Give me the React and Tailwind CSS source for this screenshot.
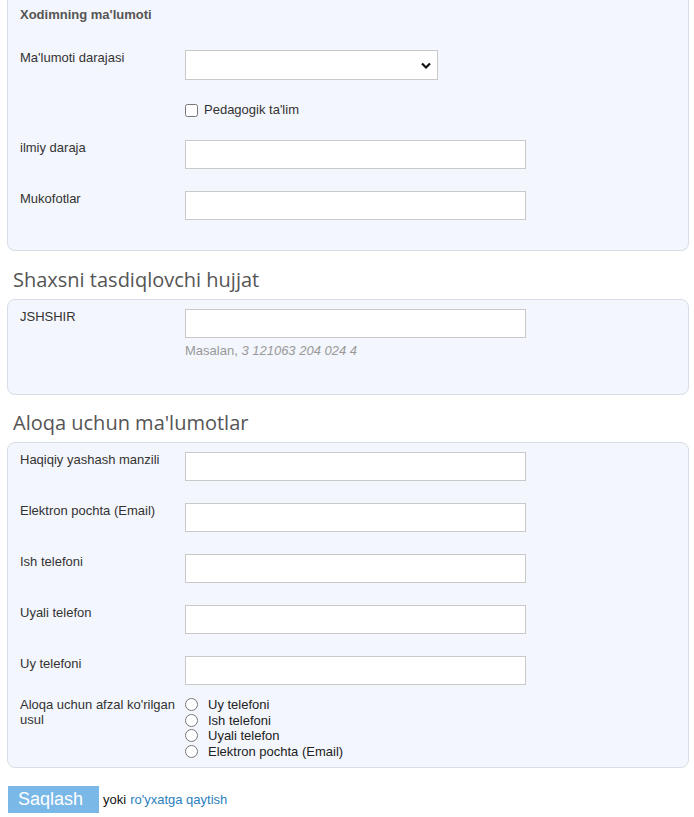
const labelCls = "w-[165px] shrink-0 pr-[5px] text-[13px] leading-[15px] text-[#333]";
const inputCls = "block h-[29px] w-[341px] border border-[#c9c9c9] bg-white px-1 text-[13px] outline-none";

function Row({ label, children, className = "" }) {
  return (
    <div className={"flex items-start " + className}>
      <div className={labelCls}>{label}</div>
      <div>{children}</div>
    </div>
  );
}

function Heading({ children, className = "pt-[15px]" }) {
  return (
    <h2 className={"pl-[6px] pb-[5px] text-[20px] leading-[28px] text-[#555] font-['Open_Sans',sans-serif] " + className}>
      {children}
    </h2>
  );
}

const radios = ["Uy telefoni", "Ish telefoni", "Uyali telefon", "Elektron pochta (Email)"];

export default function App() {
  return (
    <div className="min-h-[817px] bg-white pl-[7px] pr-[5px] font-['Liberation_Sans',Arial,sans-serif]">
      {/* Xodim */}
      <div className="rounded-b-lg border border-t-0 border-[#d8dee6] bg-[#f3f6fc] px-3 pt-[7px] pb-[30px]">
        <div className="mb-[27px] text-[13px] font-bold leading-[16px] text-[#555]">
          Xodimning ma'lumoti
        </div>
        <Row label="Ma'lumoti darajasi">
          <div className="relative h-[30px] w-[253px] border border-[#c9c9c9] bg-white">
            <svg
              className="absolute right-[5px] top-[11px]"
              width="12"
              height="8"
              viewBox="0 0 12 8"
            >
              <path d="M2 1.5 L6 5.5 L10 1.5" fill="none" stroke="#111" strokeWidth="2.2" />
            </svg>
          </div>
        </Row>
        <div className="mt-[20px] flex h-[20px] items-center pl-[165px]">
          <input type="checkbox" className="m-0 h-[13px] w-[13px]" />
          <span className="ml-[6px] text-[13px] text-[#333]">Pedagogik ta'lim</span>
        </div>
        <Row label="ilmiy daraja" className="mt-[20px]">
          <input className={inputCls} />
        </Row>
        <Row label="Mukofotlar" className="mt-[22px]">
          <input className={inputCls} />
        </Row>
      </div>

      <Heading>Shaxsni tasdiqlovchi hujjat</Heading>
      <div className="rounded-lg border border-[#d8dee6] bg-[#f3f6fc] px-3 pt-[9px] pb-[35px]">
        <Row label="JSHSHIR">
          <input className={inputCls} />
          <div className="mt-[5px] text-[13px] leading-[16px] text-[#999]">
            Masalan, <i>3 121063 204 024 4</i>
          </div>
        </Row>
      </div>

      <Heading className="pt-[14px]">Aloqa uchun ma'lumotlar</Heading>
      <div className="rounded-lg border border-[#d8dee6] bg-[#f3f6fc] px-3 pt-[9px] pb-[8px]">
        <div className="flex flex-col gap-[22px]">
          <Row label="Haqiqiy yashash manzili">
            <input className={inputCls} />
          </Row>
          <Row label="Elektron pochta (Email)">
            <input className={inputCls} />
          </Row>
          <Row label="Ish telefoni">
            <input className={inputCls} />
          </Row>
          <Row label="Uyali telefon">
            <input className={inputCls} />
          </Row>
          <Row label="Uy telefoni">
            <input className={inputCls} />
          </Row>
        </div>
        <Row label="Aloqa uchun afzal ko'rilgan usul" className="mt-[12px]">
          <div className="flex flex-col">
            {radios.map((r) => (
              <label key={r} className="flex h-[15.5px] items-center text-[13px] text-[#222]">
                <input type="radio" name="aloqa" className="m-0 h-[13px] w-[13px]" />
                <span className="ml-[10px]">{r}</span>
              </label>
            ))}
          </div>
        </Row>
      </div>

      <div className="mt-[18px] flex items-center">
        <button className="ml-px h-[27px] w-[91px] bg-[#7ab8e8] pr-[6px] text-[18px] leading-[27px] text-white">
          Saqlash
        </button>
        <span className="ml-[4px] text-[13px] text-[#111]">yoki</span>
        <a href="#" className="ml-[4px] text-[13px] text-[#2b80bd]">
          ro'yxatga qaytish
        </a>
      </div>
    </div>
  );
}
